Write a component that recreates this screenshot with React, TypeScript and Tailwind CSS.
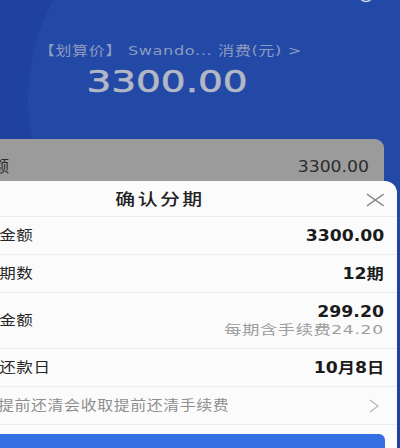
import { ReactNode } from "react";

const FONT = { fontFamily: '"DejaVu Sans", "Noto Sans CJK SC", sans-serif' };

function Row({ label, children, tall }: { label: string; children: ReactNode; tall?: boolean }) {
  return (
    <div
      className={`flex items-center justify-between border-b border-[#ededed] pl-[12px] pr-[13px] ${tall ? "h-[56px]" : "h-[38px]"}`}
    >
      <span className="inline-block origin-left scale-x-[1.18] text-[14px] tracking-[0.5px] text-[#262626] whitespace-nowrap">
        {label}
      </span>
      {children}
    </div>
  );
}

function Value({ children }: { children: ReactNode }) {
  return (
    <span className="inline-block origin-right scale-x-[1.15] text-[15px] leading-[18px] font-bold text-[#1b1b1b] whitespace-nowrap">
      {children}
    </span>
  );
}

export default function App() {
  return (
    <div className="relative w-[400px] h-[448px] overflow-hidden bg-[#1e429e]" style={FONT}>
      {/* decorative circle behind the header */}
      <div className="absolute left-[28px] top-[-112px] w-[424px] h-[424px] rounded-full bg-[#2349a6]" />
      {/* partial icon at top right */}
      <svg className="absolute right-[26px] top-[-12px]" width="16" height="15" viewBox="0 0 16 15">
        <circle cx="8" cy="7" r="6.5" fill="none" stroke="#c9d3ea" strokeWidth="1.6" />
      </svg>

      <div className="relative">
        <div className="w-[340px] pt-[41px] text-center text-[13px] leading-[20px] text-[#8d9bc0] whitespace-nowrap">
          <span className="inline-block scale-x-[1.24] tracking-[0.5px]">【划算价】 Swando... 消费(元) &gt;</span>
        </div>
        <div className="w-[335px] mt-[2px] text-center text-[30px] leading-[38px] text-[#b3b8c6]">
          <span className="inline-block scale-x-[1.3] [-webkit-text-stroke:0.6px]">3300.00</span>
        </div>

        <div className="mt-[38px] -ml-[70px] w-[454px] h-[320px] rounded-[9px] bg-[#9b9b9b]">
          <div className="flex items-center justify-between h-[56px] pl-[15px] pr-[15px]">
            <span className="text-[16px] text-[#2c2c2c]">订单金额</span>
            <span className="inline-block origin-right scale-x-[1.15] text-[15px] text-[#2c2c2c]">3300.00</span>
          </div>
        </div>
      </div>

      {/* confirm sheet over the dimmed page */}
      <div className="absolute top-[181px] left-[-47px] right-[3px] bottom-0 rounded-t-[12px] bg-[#fbfbfb]">
        <div className="flex items-center h-[36px] pt-[3px] border-b border-[#ededed]">
          <div className="w-[421px] text-center text-[16px] font-medium text-[#222]">
            <span className="inline-block scale-x-[1.24] tracking-[2px]">确认分期</span>
          </div>
          <svg className="ml-auto mr-[12px]" width="19" height="14" viewBox="0 0 19 14">
            <path d="M1 1 L18 13 M18 1 L1 13" stroke="#8a8a8a" strokeWidth="1.3" fill="none" />
          </svg>
        </div>

        <Row label="分期金额">
          <Value>3300.00</Value>
        </Row>
        <Row label="分期期数">
          <Value>12期</Value>
        </Row>
        <Row label="每期金额" tall>
          <div className="flex flex-col items-end">
            <Value>299.20</Value>
            <span className="inline-block origin-right scale-x-[1.32] text-[13px] leading-[17px] tracking-[0.5px] text-[#9c9c9c] whitespace-nowrap">
              每期含手续费24.20
            </span>
          </div>
        </Row>
        <Row label="每月还款日">
          <Value>10月8日</Value>
        </Row>
        <div className="flex items-center justify-between h-[38px] border-b border-[#ededed] pl-[12px] pr-[18px]">
          <span className="inline-block origin-left scale-x-[1.18] text-[13.5px] tracking-[0.5px] text-[#8e8e8e] whitespace-nowrap">
            若您提前还清会收取提前还清手续费
          </span>
          <svg width="10" height="14" viewBox="0 0 10 14">
            <path d="M1 1 L9 7 L1 13" stroke="#b5b5b5" strokeWidth="1.2" fill="none" />
          </svg>
        </div>

        <div className="mt-[9px] mr-[12px] h-[40px] rounded-[6px] bg-[#3470e4]" />
      </div>
    </div>
  );
}
